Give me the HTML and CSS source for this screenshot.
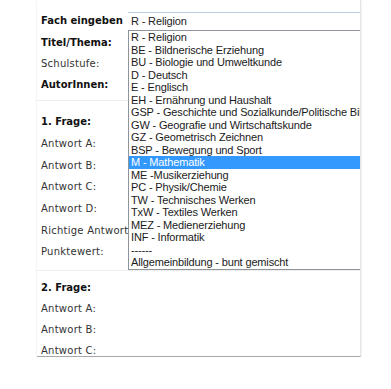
FILE: index.html
```html
<!DOCTYPE html>
<html lang="de">
  <head>
    <meta charset="UTF-8" />
    <title>Fragen eingeben</title>
    <link rel="stylesheet" href="styles.css">
  </head>
  <body>
    <div class="panel">
      <div class="section head">
        <div class="row row-select">
          <span class="label bold">Fach eingeben</span>
          <div class="select">R - Religion</div>
        </div>
        <div class="row"><span class="label bold">Titel/Thema:</span></div>
        <div class="row"><span class="label">Schulstufe:</span></div>
        <div class="row"><span class="label bold">AutorInnen:</span></div>
      </div>

      <div class="section question">
        <div class="row"><span class="label bold">1. Frage:</span></div>
        <div class="row"><span class="label">Antwort A:</span></div>
        <div class="row"><span class="label">Antwort B:</span></div>
        <div class="row"><span class="label">Antwort C:</span></div>
        <div class="row"><span class="label">Antwort D:</span></div>
        <div class="row"><span class="label">Richtige Antwort:</span></div>
        <div class="row"><span class="label">Punktewert:</span></div>
      </div>

      <div class="section question second">
        <div class="row"><span class="label bold">2. Frage:</span></div>
        <div class="row"><span class="label">Antwort A:</span></div>
        <div class="row"><span class="label">Antwort B:</span></div>
        <div class="row"><span class="label">Antwort C:</span></div>
      </div>

      <!-- open dropdown of the "Fach" select -->
      <ul class="options">
        <li>R - Religion</li>
        <li>BE - Bildnerische Erziehung</li>
        <li>BU - Biologie und Umweltkunde</li>
        <li>D - Deutsch</li>
        <li>E - Englisch</li>
        <li>EH - Ernährung und Haushalt</li>
        <li>GSP - Geschichte und Sozialkunde/Politische Bildung</li>
        <li>GW - Geografie und Wirtschaftskunde</li>
        <li>GZ - Geometrisch Zeichnen</li>
        <li>BSP - Bewegung und Sport</li>
        <li class="selected">M - Mathematik</li>
        <li>ME -Musikerziehung</li>
        <li>PC - Physik/Chemie</li>
        <li>TW - Technisches Werken</li>
        <li>TxW - Textiles Werken</li>
        <li>MEZ - Medienerziehung</li>
        <li>INF - Informatik</li>
        <li>------</li>
        <li>Allgemeinbildung - bunt gemischt</li>
      </ul>
    </div>
  </body>
</html>
```

FILE: styles.css
```css
/* Basic styles */
body {
  margin: 0;
  background-color: #ffffff;
  font-family: "DejaVu Sans", Verdana, sans-serif;
  font-size: 10px;
  color: #333;
}

.panel {
  position: relative;
  margin-left: 37px;
  width: 323px;
  height: 356px;
  overflow: hidden;
  border-right: 1px solid #e4e4e4;
  border-bottom: 1px solid #a9a9a9;
  box-shadow: 0 1px 2px rgba(0, 0, 0, 0.12);
}

.section {
  padding-left: 4px;
}

.head {
  padding-top: 12px;
  padding-bottom: 5px;
}

.question {
  border-top: 1px solid #eeeeee;
  padding-top: 10px;
  padding-bottom: 7px;
}

.second {
  padding-top: 6px;
}

.row {
  display: flex;
  align-items: center;
  height: 21px;
  white-space: nowrap;
}

.question .row {
  height: 21.7px;
}

.second .row {
  height: 21px;
}

.row-select {
  height: 17px;
  margin-bottom: 3px;
}

.label {
  width: 87px;
  flex-shrink: 0;
  letter-spacing: 0.25px;
}

.bold {
  font-weight: bold;
  color: #111;
  letter-spacing: 0;
}

.select {
  flex: 1;
  height: 16px;
  line-height: 16px;
  padding-left: 3px;
  border-top: 1px solid #b4cbe0;
  font-family: "Liberation Sans", Arial, sans-serif;
  font-size: 11px;
  letter-spacing: -0.15px;
  color: #222;
}

.options {
  position: absolute;
  left: 91px;
  top: 30px;
  width: 231px;
  margin: 0;
  padding: 0;
  list-style: none;
  background-color: #ffffff;
  border: 1px solid #8f939a;
  font-family: "Liberation Sans", Arial, sans-serif;
  font-size: 11px;
  letter-spacing: -0.15px;
  color: #1a1a1a;
}

.options li {
  height: 12.5px;
  line-height: 12.5px;
  padding-left: 2px;
  white-space: nowrap;
  overflow: hidden;
}

.options .selected {
  background-color: #3399ff;
  color: #ffffff;
}
```
